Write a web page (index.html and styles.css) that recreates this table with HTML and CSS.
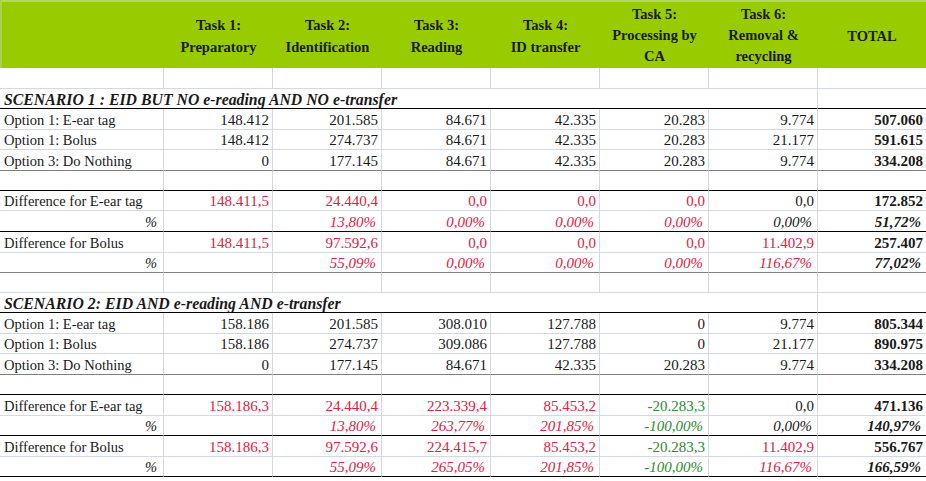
FILE: index.html
```html
<!DOCTYPE html>
<html>
<head>
<meta charset="utf-8">
<link rel="stylesheet" href="styles.css">
</head>
<body>
<div class="sheet">
  <div class="row head">
    <div></div>
    <div><span>Task 1:<br>Preparatory</span></div>
    <div><span>Task 2:<br>Identification</span></div>
    <div><span>Task 3:<br>Reading</span></div>
    <div><span>Task 4:<br>ID transfer</span></div>
    <div class="tall"><span>Task 5:<br>Processing by<br>CA</span></div>
    <div class="tall"><span>Task 6:<br>Removal &amp;<br>recycling</span></div>
    <div><span>TOTAL</span></div>
  </div>

  <div class="row empty"><div></div><div></div><div></div><div></div><div></div><div></div><div></div><div></div></div>
  <div class="row scen bk"><div class="title">SCENARIO 1 : EID BUT NO e-reading AND NO e-transfer</div><div></div></div>
  <div class="row"><div class="lab">Option 1: E-ear tag</div><div>148.412</div><div>201.585</div><div>84.671</div><div>42.335</div><div>20.283</div><div>9.774</div><div class="tot">507.060</div></div>
  <div class="row"><div class="lab">Option 1: Bolus</div><div>148.412</div><div>274.737</div><div>84.671</div><div>42.335</div><div>20.283</div><div>21.177</div><div class="tot">591.615</div></div>
  <div class="row gy"><div class="lab">Option 3: Do Nothing</div><div>0</div><div>177.145</div><div>84.671</div><div>42.335</div><div>20.283</div><div>9.774</div><div class="tot">334.208</div></div>
  <div class="row empty bk"><div></div><div></div><div></div><div></div><div></div><div></div><div></div><div></div></div>
  <div class="row"><div class="lab">Difference for E-ear tag</div><div class="red">148.411,5</div><div class="red">24.440,4</div><div class="red">0,0</div><div class="red">0,0</div><div class="red">0,0</div><div>0,0</div><div class="tot">172.852</div></div>
  <div class="row pct bk"><div class="lab">%</div><div></div><div class="red">13,80%</div><div class="red">0,00%</div><div class="red">0,00%</div><div class="red">0,00%</div><div>0,00%</div><div class="tot">51,72%</div></div>
  <div class="row"><div class="lab">Difference for Bolus</div><div class="red">148.411,5</div><div class="red">97.592,6</div><div class="red">0,0</div><div class="red">0,0</div><div class="red">0,0</div><div class="red">11.402,9</div><div class="tot">257.407</div></div>
  <div class="row pct gy"><div class="lab">%</div><div></div><div class="red">55,09%</div><div class="red">0,00%</div><div class="red">0,00%</div><div class="red">0,00%</div><div class="red">116,67%</div><div class="tot">77,02%</div></div>

  <div class="row empty"><div></div><div></div><div></div><div></div><div></div><div></div><div></div><div></div></div>
  <div class="row scen bk"><div class="title">SCENARIO 2: EID AND e-reading AND e-transfer</div><div></div></div>
  <div class="row"><div class="lab">Option 1: E-ear tag</div><div>158.186</div><div>201.585</div><div>308.010</div><div>127.788</div><div>0</div><div>9.774</div><div class="tot">805.344</div></div>
  <div class="row"><div class="lab">Option 1: Bolus</div><div>158.186</div><div>274.737</div><div>309.086</div><div>127.788</div><div>0</div><div>21.177</div><div class="tot">890.975</div></div>
  <div class="row gy"><div class="lab">Option 3: Do Nothing</div><div>0</div><div>177.145</div><div>84.671</div><div>42.335</div><div>20.283</div><div>9.774</div><div class="tot">334.208</div></div>
  <div class="row empty bk"><div></div><div></div><div></div><div></div><div></div><div></div><div></div><div></div></div>
  <div class="row"><div class="lab">Difference for E-ear tag</div><div class="red">158.186,3</div><div class="red">24.440,4</div><div class="red">223.339,4</div><div class="red">85.453,2</div><div class="grn">-20.283,3</div><div>0,0</div><div class="tot">471.136</div></div>
  <div class="row pct bk"><div class="lab">%</div><div></div><div class="red">13,80%</div><div class="red">263,77%</div><div class="red">201,85%</div><div class="grn">-100,00%</div><div>0,00%</div><div class="tot">140,97%</div></div>
  <div class="row"><div class="lab">Difference for Bolus</div><div class="red">158.186,3</div><div class="red">97.592,6</div><div class="red">224.415,7</div><div class="red">85.453,2</div><div class="grn">-20.283,3</div><div class="red">11.402,9</div><div class="tot">556.767</div></div>
  <div class="row pct bk"><div class="lab">%</div><div></div><div class="red">55,09%</div><div class="red">265,05%</div><div class="red">201,85%</div><div class="grn">-100,00%</div><div class="red">116,67%</div><div class="tot">166,59%</div></div>
</div>
</body>
</html>
```

FILE: styles.css
```css
html, body {
  margin: 0;
  padding: 0;
  background: #ffffff;
}

body {
  font-family: "Liberation Serif", "Times New Roman", serif;
  color: #1a1a1a;
}

.sheet {
  width: 926px;
  display: grid;
  grid-template-columns: 164px repeat(6, 109px) 108px;
  grid-template-rows: 68px 21px 20px 21px 20px 21px 20px 20px 21px 21px 20px 20px 20px 21px 20px 21px 20px 21px 20px 21px 20px;
}

.row {
  display: contents;
}

.row > div {
  box-sizing: border-box;
  border-right: 1px solid #d3d8e2;
  border-bottom: 1px solid #d3d8e2;
  display: flex;
  align-items: flex-end;
  justify-content: flex-end;
  padding: 0 3px 0 3px;
  font-size: 15px;
  line-height: 17px;
  white-space: nowrap;
  overflow: hidden;
}

.row > div:last-child {
  border-right: none;
}

.row.bk > div {
  border-bottom-color: #000000;
}

.row.gy > div {
  border-bottom-color: #808080;
}

/* header */
.row.head > div {
  border: none;
  background: linear-gradient(#b2d66a 0, #b2d66a 2px, #99cc00 2px);
  align-items: center;
  justify-content: center;
  text-align: center;
  font-weight: bold;
  font-size: 14.5px;
  line-height: 22px;
  color: #1a1a1a;
  padding: 3px 0 0 0;
}

.row.head > div:first-child {
  background: linear-gradient(90deg, #a9d24d 0, #a9d24d 2px, transparent 2px),
              linear-gradient(#b2d66a 0, #b2d66a 2px, #99cc00 2px);
}

.row.head > div.tall {
  line-height: 21px;
  padding-top: 3px;
}

.row > div.lab {
  justify-content: flex-start;
  padding-left: 4px;
  font-size: 14.5px;
}

.row.pct > div {
  font-style: italic;
  padding-right: 5px;
}

.row.pct > div.lab {
  justify-content: flex-end;
  padding-right: 6px;
}

.row.scen > div.title {
  grid-column: 1 / 8;
  justify-content: flex-start;
  padding-left: 4px;
  font-weight: bold;
  font-style: italic;
  font-size: 15.8px;
}

.tot {
  font-weight: bold;
}

.red {
  color: #e3203f;
}

.grn {
  color: #2e8b2e;
}
```
